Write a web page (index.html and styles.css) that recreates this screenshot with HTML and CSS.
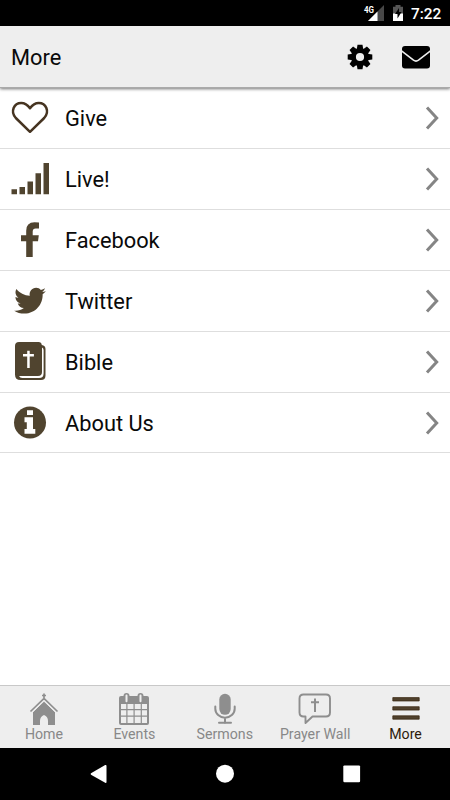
FILE: index.html
```html
<!DOCTYPE html>
<html lang="en">
<head>
<meta charset="utf-8">
<title>More</title>
<link rel="stylesheet" href="styles.css">
</head>
<body>
<div class="screen">
  <div class="status">
    <svg class="status-icons" width="44" height="26" viewBox="362 0 44 26">
      <path d="M384 5v16h-16z" fill="#484848"/>
      <path d="M368 21l9.500-9.500V21z" fill="#fff"/>
      <path d="M395.500 5h5v1.700h2.500V14h-10V6.700h2.500z" fill="#555"/>
      <path d="M393 13.500h10V21h-10z" fill="#fff"/>
      <path d="M399 8l-4 6h2.500v4.500l4-6.500H399z" fill="#000"/>
      <text class="network" x="364" y="12.500" textLength="10" lengthAdjust="spacingAndGlyphs">4G</text>
    </svg>
    <span class="clock">7:22</span>
  </div>
  <header class="header">
    <h1 class="title">More</h1>
    <div class="actions">
      <svg width="26" height="26" viewBox="-13 -13 26 26">
        <g fill="#000">
          <path d="M-2.500-12.300h5l.8 5h-6.600zM-2.500 12.300h5l.8-5h-6.600zM-12.300-2.500v5l5 .8v-6.600zM12.300-2.500v5l-5 .8v-6.600z"/>
          <path transform="rotate(45)" d="M-2.500-12.300h5l.8 5h-6.600zM-2.500 12.300h5l.8-5h-6.600zM-12.300-2.500v5l5 .8v-6.600zM12.300-2.500v5l-5 .8v-6.600z"/>
        </g>
        <circle r="6.600" fill="none" stroke="#000" stroke-width="5"/>
      </svg>
      <svg width="28" height="24" viewBox="0 0 28 24">
        <rect y="1" width="28" height="22.500" rx="3" fill="#000"/>
        <path d="M-1 5.500l12.500 9.700q2.500 1.800 5 0L29 5.500" fill="none" stroke="#eee" stroke-width="1.600"/>
      </svg>
    </div>
  </header>
  <main class="list">
    <a class="row">
      <svg class="icon" viewBox="0 0 60 60"><path d="M30 43.800L15.800 30C10 23.500 14 15 21.200 15c4 0 6.700 2.300 8.800 5.300 2.100-3 4.800-5.300 8.800-5.300 7.200 0 11.200 8.500 5.400 15z" fill="none" stroke="#463421" stroke-width="2.500" stroke-linejoin="round"/></svg>
      <span class="label">Give</span>
      <svg class="chevron" viewBox="0 0 16 28"><path d="M3 3.500L12.700 14 3 24.500"/></svg>
    </a>
    <a class="row">
      <svg class="icon" viewBox="0 0 60 60"><path d="M11.500 40.300H17v5h-5.500zM19.500 38H25v7.300h-5.500zM27.500 32.500H33v12.800h-5.500zM35.500 24.300H41v21h-5.500zM43.500 14H49v31.300h-5.500z"/></svg>
      <span class="label">Live!</span>
      <svg class="chevron" viewBox="0 0 16 28"><path d="M3 3.500L12.700 14 3 24.500"/></svg>
    </a>
    <a class="row">
      <svg class="icon" viewBox="0 0 60 60"><path d="M39 12.600v6h-3.300q-3 0-3 3v3.700h6.100l-.8 6h-5.300V47h-6.500V31.300H21v-6h5.200v-4.500q0-8.500 8.300-8.500z"/></svg>
      <span class="label">Facebook</span>
      <svg class="chevron" viewBox="0 0 16 28"><path d="M3 3.500L12.700 14 3 24.500"/></svg>
    </a>
    <a class="row">
      <svg class="icon" viewBox="0 0 60 60"><path transform="translate(14.200 13.900) scale(1.320)" d="M24 4.557c-.883.392-1.832.656-2.828.775 1.017-.609 1.798-1.574 2.165-2.724-.951.564-2.005.974-3.127 1.195-.897-.957-2.178-1.555-3.594-1.555-3.179 0-5.515 2.966-4.797 6.045-4.091-.205-7.719-2.165-10.148-5.144-1.290 2.213-.669 5.108 1.523 6.574-.806-.026-1.566-.247-2.229-.616-.054 2.281 1.581 4.415 3.949 4.890-.693.188-1.452.232-2.224.084.626 1.956 2.444 3.379 4.600 3.419-2.070 1.623-4.678 2.348-7.290 2.040 2.179 1.397 4.768 2.212 7.548 2.212 9.142 0 14.307-7.721 13.995-14.646.962-.695 1.797-1.562 2.457-2.549z"/></svg>
      <span class="label">Twitter</span>
      <svg class="chevron" viewBox="0 0 16 28"><path d="M3 3.500L12.700 14 3 24.500"/></svg>
    </a>
    <a class="row">
      <svg class="icon" viewBox="0 0 60 60"><path d="M19 10h19.500q3 0 3.300 3 3.700.6 3.700 4v26.500q0 4.500-4.500 4.500H20.500q-5.500 0-5.500-5.500V14q0-4 4-4z"/><path d="M42 15.500V40q0 4-4 4H19q1 2 3.200 2H39q4.600 0 4.600-4.500V18q0-2-1.600-2.500z" fill="#fff"/><path d="M27.200 18.800h2.500V22h4.200v2.400h-4.200v11.500h-2.500V24.400H23V22h4.200z" fill="#fff"/></svg>
      <span class="label">Bible</span>
      <svg class="chevron" viewBox="0 0 16 28"><path d="M3 3.500L12.700 14 3 24.500"/></svg>
    </a>
    <a class="row">
      <svg class="icon" viewBox="0 0 60 60"><circle cx="30" cy="29.500" r="16"/><path d="M27 17.200h6v4.800h-6zM24.500 24.300H33V36h2.300v4.800H24.500V36h2.300v-6.800h-2.300z" fill="#fff"/></svg>
      <span class="label">About Us</span>
      <svg class="chevron" viewBox="0 0 16 28"><path d="M3 3.500L12.700 14 3 24.500"/></svg>
    </a>
  </main>
  <nav class="tabs">
    <a class="tab">
      <svg class="tab-icon" viewBox="0 0 36 36"><path d="M18 9.200L29 20v13h-7v-4q0-4.500-4-6-4 1.500-4 6v4H7V20z" fill="#8e8e8e"/><path d="M4.500 19.500L18 6.500l13.500 13M18 1.500V8M16 3.500h4" fill="none" stroke="#8e8e8e" stroke-width="1.700"/><path d="M5.600 21.100L18 9.200l12.400 11.900" fill="none" stroke="#eee" stroke-width=".9"/></svg>
      <span>Home</span>
    </a>
    <a class="tab">
      <svg class="tab-icon" viewBox="0 0 36 36"><rect x="3" y="4" width="30" height="29" rx="2" fill="#8e8e8e"/><path d="M5 12h5.300v5H5zM11.500 12h6v5h-6zM18.700 12h6v5h-6zM25.900 12H31v5h-5.100zM5 18.200h5.300v5.300H5zM11.500 18.200h6v5.300h-6zM18.700 18.200h6v5.300h-6zM25.900 18.200H31v5.300h-5.100zM5 24.700h5.300V31H5zM11.500 24.700h6V31h-6zM18.700 24.700h6V31h-6zM25.900 24.700H31V31h-5.100z" fill="#eee"/><rect x="7.500" y="1" width="6" height="9" rx="3" fill="#8e8e8e"/><rect x="21.500" y="1" width="6" height="9" rx="3" fill="#8e8e8e"/><path d="M10.500 3.500v5.700M24.500 3.500v5.700" stroke="#eee" stroke-width="2" stroke-linecap="round"/></svg>
      <span>Events</span>
    </a>
    <a class="tab">
      <svg class="tab-icon" viewBox="0 0 36 36"><rect x="12.300" y="1.800" width="11.400" height="21" rx="5.700" fill="#8e8e8e"/><path d="M8.300 14.500v2.200a9.700 9 0 0 0 19.400 0v-2.200M18 26v5M12 30.800h12" fill="none" stroke="#8e8e8e" stroke-width="2" stroke-linecap="round"/></svg>
      <span>Sermons</span>
    </a>
    <a class="tab">
      <svg class="tab-icon" viewBox="0 0 36 36"><path d="M6.500 2.500h22.500q4 0 4 4V20.500q0 4-4 4H15.500L8.500 31v-6.500h-2q-4 0-4-4v-14q0-4 4-4z" fill="none" stroke="#8e8e8e" stroke-width="1.900" stroke-linejoin="round"/><path d="M18 6.500V20M14 10.300h8" fill="none" stroke="#8e8e8e" stroke-width="2"/></svg>
      <span>Prayer Wall</span>
    </a>
    <a class="tab active">
      <svg class="tab-icon" viewBox="0 0 36 36"><path d="M4.800 5.600h26.400v3.400H4.800zM4.800 14.700h26.400v3.400H4.800zM4.800 23.800h26.400v3.400H4.800z" fill="#50412d" stroke="#35220c" stroke-width=".7"/></svg>
      <span>More</span>
    </a>
  </nav>
  <div class="system">
    <svg width="450" height="52" viewBox="0 0 450 52" fill="#fff"><path d="M91 25.200L105.200 17q1.300-.5 1.300 1v16q0 1.500-1.300.8L91 26.700q-.8-.7 0-1.500z"/><circle cx="225" cy="25.700" r="9"/><rect x="343.300" y="17.400" width="16.800" height="16.800" rx="1.200"/></svg>
  </div>
</div>
</body>
</html>
```
FILE: styles.css
```css
* { box-sizing: border-box; }
body { margin: 0; background: #fff; font-family: Roboto, "Liberation Sans", sans-serif; color: #0a0a0a; }
svg { display: block; flex: none; }
.screen { display: flex; flex-direction: column; width: 450px; height: 800px; overflow: hidden; }
.status { display: flex; justify-content: flex-end; align-items: center; height: 26px; flex: none; padding-right: 9px; background: #000; color: #fff; }
.network { font-size: 9px; font-weight: 700; fill: #fff; }
.clock { width: 30px; margin-left: 5px; padding-top: 2px; font-size: 15.4px; line-height: 26px; font-weight: 500; white-space: nowrap; }
.header { display: flex; justify-content: space-between; align-items: center; height: 62px; flex: none; padding: 1px 20px 0 11px; background: #eee; border-bottom: 1px solid #aaa; box-shadow: 0 1px 3px rgba(0, 0, 0, .55); }
.title { margin: 0; padding-top: 2px; font-size: 21.8px; line-height: 30px; font-weight: 400; }
.actions { display: flex; align-items: center; gap: 29px; }
.list { flex: 1; padding-top: .4px; }
.row { display: flex; align-items: center; height: 60.85px; border-bottom: 1px solid #dedede; }
.icon { width: 60px; height: 60px; fill: #50442f; }
.label { flex: 1; padding: 2.2px 0 0 5px; font-size: 21.8px; line-height: 30px; }
.chevron { width: 16px; height: 28px; margin-right: 10px; fill: none; stroke: #858585; stroke-width: 3; }
.tabs { display: flex; flex: none; height: 63px; margin: 0 -.8px 0 -1.2px; padding-top: 6px; background: #eee; border-top: 1.5px solid #c8c8c8; }
.tab { flex: 1 1 0; display: flex; flex-direction: column; align-items: center; font-size: 14.2px; line-height: 16px; color: #888; white-space: nowrap; }
.tab-icon { width: 36px; height: 36px; margin-bottom: -2px; }
.active { color: #2d1b0c; }
.system { flex: none; height: 52px; background: #000; }
```
